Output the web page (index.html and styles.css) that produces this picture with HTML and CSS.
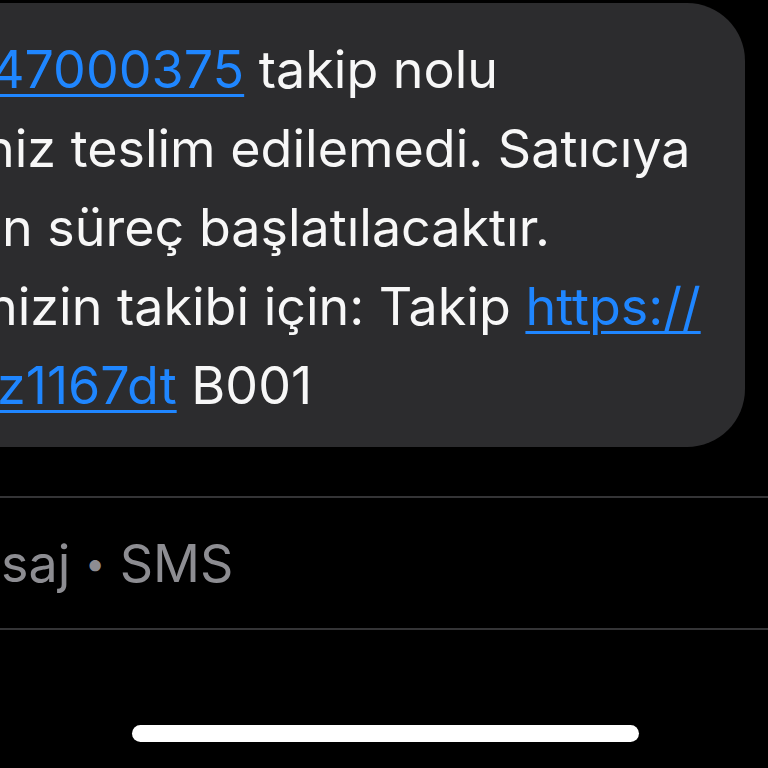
FILE: index.html
```html
<!DOCTYPE html>
<html lang="tr">
<head>
<meta charset="utf-8">
<title>Mesaj</title>
<link rel="stylesheet" href="styles.css">
</head>
<body>
<div class="screen">
  <div class="bubble">
    <div class="line l1"><a class="link">247000375</a> takip nolu</div>
    <div class="line l2">niz teslim edilemedi. Satıcıya</div>
    <div class="line l3">n süreç başlatılacaktır.</div>
    <div class="line l4">nizin takibi için: Takip <a class="link">https://</a></div>
    <div class="line l5"><a class="link">tz1167dt</a> B001</div>
  </div>
  <div class="sep sep-top"></div>
  <div class="meta"><span class="meta-text">saj <span class="dot">•</span> SMS</span></div>
  <div class="sep"></div>
  <div class="home-area"><div class="home-indicator"></div></div>
</div>
</body>
</html>
```

FILE: styles.css
```css
html, body {
  margin: 0;
  padding: 0;
  background: #000;
}
body {
  width: 768px;
  height: 768px;
  overflow: hidden;
  font-family: Inter, "Liberation Sans", sans-serif;
}
.screen {
  display: flex;
  flex-direction: column;
  width: 768px;
  height: 768px;
  overflow: hidden;
}
.bubble {
  margin-top: 3px;
  margin-right: 23px;
  height: 444px;
  box-sizing: border-box;
  background: #2c2c2e;
  border-radius: 0 58px 58px 0;
  padding: 27px 0 22px 0;
  color: #f7f7f7;
  font-size: 52px;
  line-height: 79px;
  overflow: hidden;
  flex: none;
}
.line {
  white-space: nowrap;
}
.l1 { margin-left: -40px; }
.l2 { margin-left: -16px; }
.l3 { margin-left: 2px; }
.l4 { margin-left: -13px; }
.l5 { margin-left: -20px; }
.link {
  color: #1f86ff;
  text-decoration: underline;
  text-decoration-thickness: 3px;
  text-underline-offset: 6px;
}
.sep {
  height: 2px;
  background: #343436;
  flex: none;
}
.sep-top {
  margin-top: 49px;
}
.meta {
  height: 130px;
  display: flex;
  align-items: center;
  color: #8d8d92;
  font-size: 52px;
  flex: none;
}
.meta-text {
  margin-left: 1px;
  white-space: nowrap;
  position: relative;
  top: 0;
}
.dot {
  font-size: 36px;
  vertical-align: 6px;
}
.home-area {
  flex: 1;
  display: flex;
  justify-content: center;
  padding-top: 95px;
}
.home-indicator {
  width: 507px;
  height: 17px;
  border-radius: 9px;
  background: #fff;
  margin-left: 3px;
}
```
